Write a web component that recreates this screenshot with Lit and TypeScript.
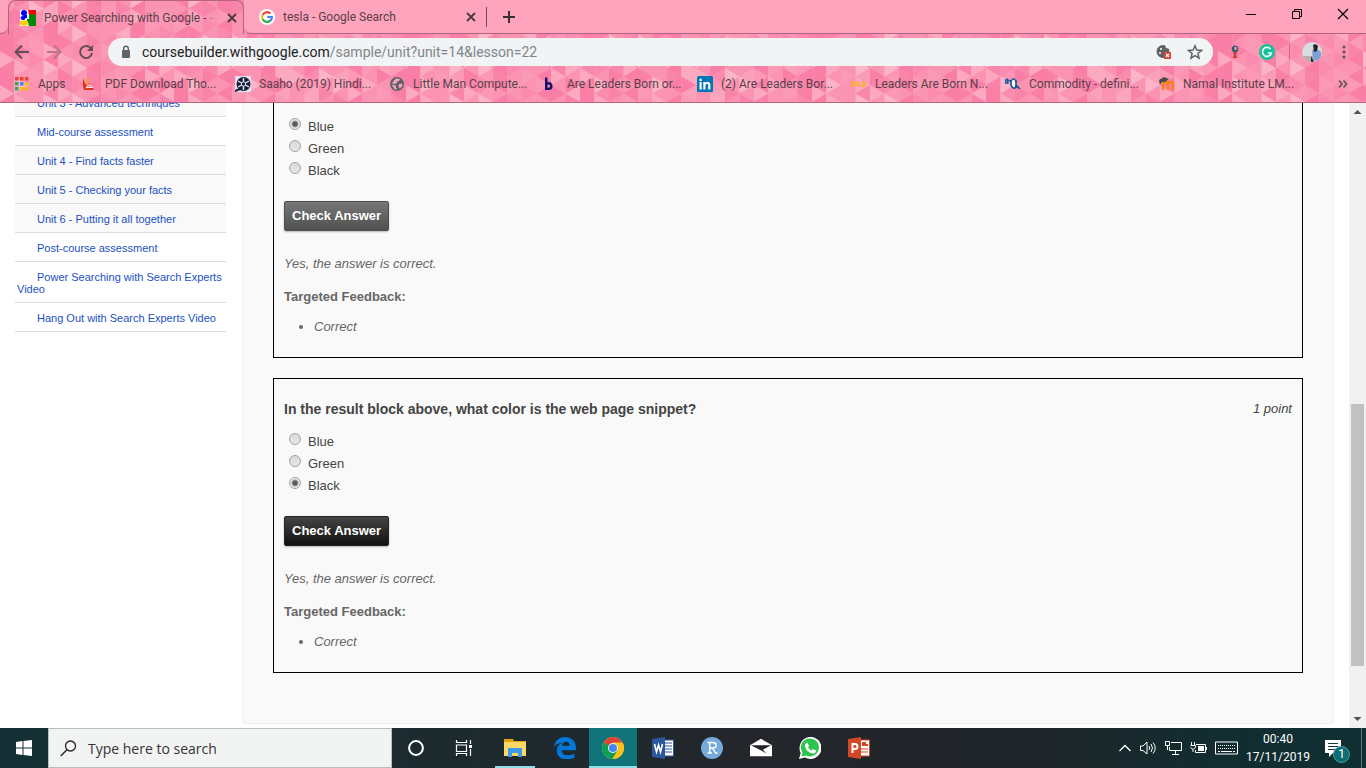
import { LitElement, html, svg, css } from "lit";
import { customElement, property } from "lit/decorators.js";

/* Faceted pink theme: right-pointing triangles in soft tints over a banded base. */
const TINTS = ["#fca9c0", "#f984aa", "#fb9ab6", "#fcb4c8", "#f97fa7", "#fb93b2", "#fa8bae"];
const facets = () => {
  const out = [];
  const step = 14.5;
  const tall = 17;
  for (let c = 0; c < 28; c++) {
    const x = c * step;
    out.push(svg`<path fill=${TINTS[4 + ((c * c + 3 * c) % 3)]} d=${`M${x} 0h${step + 0.3}v102h-${step + 0.3}z`}></path>`);
    for (let r = -1; r < 7; r++) {
      const y = r * tall + (c % 2 ? tall / 2 : 0);
      const n = (c * 31 + r * 17 + c * r * 7 + c * c * 3 + 40) % 97;
      const m = (c * 13 + r * 29 + c * r * 5 + r * r * 11 + 60) % 89;
      out.push(svg`<path fill=${TINTS[n % 7]} d=${`M${x} ${y}V${y + tall}L${x + step} ${y + tall / 2}Z`}></path>`);
      if (m % 3 === 0) {
        out.push(svg`<path fill=${TINTS[m % 7]} fill-opacity=".7" d=${`M${x + step} ${y + tall / 2}V${y + tall * 1.5}L${x} ${y + tall}Z`}></path>`);
      }
    }
  }
  return out;
};

const icons: Record<string, unknown> = {
  courses: svg`<svg viewBox="0 0 16 16"><path fill="#fff" d="M0 0h16v16H0z"/><ellipse cx="4" cy="3" rx="3" ry="3" fill="#00f"/><ellipse cx="3" cy="8" rx="2.500" ry="2" fill="#00f"/><path fill="#00f" d="M4 5h3v3H4z"/><path fill="#f00" d="M8 0h8v5H9z"/><path fill="#080" d="M9 4.500h7V16H9q-1-1-.5-3L7 11V9h2z"/><ellipse cx="4" cy="13" rx="4" ry="2.800" fill="#fc0"/></svg>`,
  google: svg`<svg viewBox="0 0 16 16"><circle cx="8" cy="8" r="8" fill="#fff"/><g fill="none" stroke-width="2.2"><path stroke="#ea4335" d="M3.700 6A4.800 4.800 0 0 1 11.500 4.600"/><path stroke="#fbbc05" d="M3.700 5.800A4.900 4.900 0 0 0 3.800 10.600"/><path stroke="#34a853" d="M3.700 10.300A4.900 4.900 0 0 0 11.300 11.600"/><path stroke="#4285f4" d="M8.200 8H12.900A4.800 4.800 0 0 1 11.100 11.800"/></g></svg>`,
  apps: svg`<svg viewBox="0 0 14 14"><path fill="#ea4335" d="M0 0h3.500v3.500H0zM5 0h3.500v3.500H5zM10 0h3.500v3.500H10z"/><path fill="#34a853" d="M0 5h3.500v3.500H0zM0 10h3.500v3.500H0z"/><path fill="#4285f4" d="M5 5h3.500v3.500H5z"/><path fill="#fbbc05" d="M10 5h3.500v3.500H10zM5 10h3.500v3.500H5zM10 10h3.500v3.500H10z"/></svg>`,
  pdf: svg`<svg viewBox="0 0 16 16"><path fill="#f5a31b" d="M6 1q3 2 1 5l-1 5-1-4z"/><path fill="#e0301e" d="M2 2l2 5 2 3 3-4-1 4 4 2 1 2H3l-1-4z"/><path fill="none" stroke="#fbdce4" stroke-width="1.200" d="M5 12l3-3 3 2.500H5"/></svg>`,
  reel: svg`<svg viewBox="0 0 16 16"><path fill="#dfe3ee" d="M0 0h16v16H0z"/><circle cx="8.500" cy="8" r="7" fill="#171d3b"/><path stroke="#e6e9f2" stroke-width="1.400" d="M8.500 2v12M3 5l11 6M14 5L3 11"/><circle cx="8.500" cy="8" r="2.200" fill="#171d3b" stroke="#e6e9f2"/><path stroke="#171d3b" stroke-width="2" d="M0 15l5-2"/></svg>`,
  globe: svg`<svg viewBox="0 0 16 16"><circle cx="8" cy="8" r="7" fill="#5f6368"/><path fill="#f9a5bf" d="M7 2.500l4 .5-1 2-2 .5-.5 2L5 8l-2-1zM2.500 8.500l4 1 .5 2 1.500 2-3-.5zM10 8l3-.5.5 2-2.500 3-1.500-2z"/></svg>`,
  b: svg`<svg viewBox="0 0 16 16"><path fill="none" stroke="#15106b" stroke-width="2.400" d="M3.200 1.500v12.500M3.200 10q0-2.800 2.500-2.800T8.300 10 5.700 12.900 3.200 10"/></svg>`,
  linkedin: svg`<svg viewBox="0 0 16 16"><rect width="16" height="16" rx="1.500" fill="#0077b5"/><path fill="#fff" d="M2.500 6h2.200v7.500H2.500zM2.500 2.800h2.200V5H2.500zM6.300 6h2.100v1q2-2 4-.6 1 .8 1 2.600v4.500h-2.200V9.500q0-1.700-1.200-1.700-1.500 0-1.500 1.700v4H6.300z"/></svg>`,
  phd: svg`<svg viewBox="0 0 16 16"><g fill="none" stroke="#fbae2e" stroke-width="1.600"><path d="M1 11V6h2.500v3H1M6.500 5v6M6.500 8.500H9V11M12 6v4.500h1q2.500-2.200 0-4.500z"/></g></svg>`,
  oa: svg`<svg viewBox="0 0 16 16"><path fill="#fff" d="M6 3h5v9H7z"/><g fill="none" stroke="#175a9b" stroke-width="1.600"><path d="M.8 8V4q2-2 2 1v3M4 5q2-2 2 3M6 8q0-5 2.500-5T11 8t-2.500 4T6 8M11 4v8M11 9l4 4"/></g></svg>`,
  moodle: svg`<svg viewBox="0 0 16 16"><path fill="none" stroke="#f98012" stroke-width="2.400" d="M4 14V9q0-3 2.500-3T9 9v5M9 9q0-3 2.500-3T14 9v5"/><path fill="#4a4a4a" d="M0 4l5-3 5 2-4 3-3 0-2 3z"/></svg>`,
  folder: svg`<svg viewBox="0 0 22 20"><path fill="#e6a008" d="M0 1h9l1 2h12v5H0z"/><path fill="#ffd767" d="M0 4h22v14H0z"/><path fill="#3a9be8" d="M4 10h14v9h-4v-4H8v4H4z"/></svg>`,
  edge: svg`<svg viewBox="0 0 20 20"><path fill="#0078d7" d="M0 9C1 3 5 0 10 0c6 0 10 4 10 10v2H7c0 3 2 4.500 5.500 4.500 2.500 0 4.500-.6 6-1.500v4C16 20 14 20.500 11.500 20.500 6 20.500 2.500 17 2.500 12.500 2.500 9 4.500 6.500 7.500 5 4 5.500 1.500 7 0 9zm7.200-1h7c0-2.500-1-3.700-3.400-3.700-2 0-3.300 1.500-3.600 3.700z"/></svg>`,
  chrome: svg`<svg viewBox="0 0 22 22"><circle cx="11" cy="11" r="11" fill="#fbc116"/><path fill="#db4437" d="M11 11L1.500 5.500A11 11 0 0 1 20.500 5.500H11z"/><path fill="#0f9d58" d="M11 11L1.500 5.500A11 11 0 0 0 10.500 22L16 13z"/><path fill="#fbc116" d="M11 6h9.800A11 11 0 0 1 10.500 22L16 13z"/><circle cx="11" cy="11" r="5" fill="#f1f1f1"/><circle cx="11" cy="11" r="4" fill="#4285f4"/></svg>`,
  word: svg`<svg viewBox="0 0 22 22"><path fill="#fff" stroke="#2b579a" d="M11 3h10.500v16H11z"/><path stroke="#2b579a" stroke-width="1.200" d="M13 6h7M13 9h7M13 12h7M13 15h7"/><path fill="#2b579a" d="M0 2l13-2v22L0 20z"/><path fill="none" stroke="#fff" stroke-width="1.600" d="M2.500 7l2 8 2-7 2 7 2-8"/></svg>`,
  r: svg`<svg viewBox="0 0 24 24"><circle cx="12" cy="12" r="12" fill="#75aadb"/><path fill="none" stroke="#fff" stroke-width="1.500" d="M7 6h6q3.500 0 3.500 3T13 12H9.500M9.500 6v11.500M7 17.500h5M12.500 12l3.500 5.500h2"/></svg>`,
  mail: svg`<svg viewBox="0 0 24 20"><path fill="#fff" d="M0 7L12 0l12 7v12H0z"/><path fill="#222429" d="M1 7h22l-9 5 4 4-9-5z"/></svg>`,
  whatsapp: svg`<svg viewBox="0 0 22 22"><path fill="#fff" d="M0 22l1.700-6A11 11 0 1 1 6 20.500z"/><path fill="#2cc64f" d="M2.500 19.500l1-4A9 9 0 1 1 7 18.500z"/><path fill="#fff" d="M7 6l1.500-.3L10 9 9 10.300q1.200 2.200 3.500 3.200l1.500-1.500 3 1.500q0 3-3 3Q7.500 16 6 9q0-2 1-3z"/></svg>`,
  ppt: svg`<svg viewBox="0 0 22 22"><path fill="#fff" stroke="#d24726" d="M11 3h10.500v16H11z"/><path fill="#d24726" d="M14 5h4v4h-4zM18 7h2v2h-2z"/><path stroke="#d24726" stroke-width="1.200" d="M13 12h7M13 15h7"/><path fill="#d24726" d="M0 2l13-2v22L0 20z"/><path fill="none" stroke="#fff" stroke-width="2" d="M4.500 16V7H7q2.500 0 2.500 2.500T7 12H4.500"/></svg>`,
};

@customElement("browser-frame")
class BrowserFrame extends LitElement {
  static styles = css`
    :host { display: block; flex: none; font: 12px/16px Roboto, "Open Sans", sans-serif; color: #5a3f4a; }
    svg { display: block; flex: none; }
    button { border: 0; padding: 0; background: none; color: inherit; display: flex; }
    a { color: inherit; text-decoration: none; }
    .frame { position: relative; overflow: hidden; border-bottom: 1px solid #b5637f; }
    .theme { position: absolute; inset: 0; width: 100%; height: 100%; }
    .rows { position: relative; }
    .tabs { display: flex; height: 34px; }
    .tab { display: flex; align-items: center; flex: none; box-sizing: border-box; }
    .open { width: 236px; border: 1px solid #b5637f; border-bottom: 0; border-radius: 8px 8px 0 0; margin-left: 8px; padding: 0 3px 0 11px; }
    .rest { flex: 1; display: flex; background: #ffa4bd; border-bottom: 1px solid #b5637f; border-radius: 0 0 0 7px; }
    .lead { width: 8px; flex: none; margin-right: -8px; background: #ffa4bd; border-bottom: 1px solid #b5637f; border-radius: 0 0 8px 0; }
    .favicon { width: 16px; height: 16px; margin-right: 8px; }
    .title { flex: 1; white-space: nowrap; }
    .faint { opacity: .4; }
    .other { width: 235px; padding-left: 15px; }
    .new { align-items: center; gap: 15px; display: flex; margin-left: 7px; }
    .bar { width: 1px; height: 20px; background: #754c59; }
    .window { margin-left: auto; display: flex; gap: 32px; padding: 7px 16px 0 0; }
    .tools { display: flex; align-items: center; height: 36px; padding: 0 19px 0 14px; }
    .nav { display: flex; gap: 16px; margin-right: 14px; }
    .address { flex: 1; display: flex; align-items: center; height: 28px; border-radius: 14px; background: #f1f3f4; padding: 0 10px 0 13px; gap: 15px; }
    .url { flex: 1; margin-left: -4px; font-size: 14px; line-height: 20px; color: #80868b; }
    .host { color: #202124; }
    .ext { display: flex; align-items: center; gap: 16px; margin-left: 14px; }
    .person { display: flex; align-items: center; gap: 12px; margin: 0 3px 0 -2px; }
    .divider { width: 1px; height: 16px; background: #c36d88; }
    .marks { display: flex; align-items: center; height: 32px; padding: 0 18px 4px 15px; box-sizing: border-box; }
    .mark { display: flex; align-items: center; width: 154px; white-space: nowrap; gap: 8px; }
    .mark svg { width: 16px; height: 16px; }
    .apps { width: 66px; gap: 9px; }
    .apps svg { width: 14px; height: 14px; }
    .more { margin-left: auto; }
  `;
  render() {
    const marks = [["pdf", "PDF Download Tho..."], ["reel", "Saaho (2019) Hindi..."], ["globe", "Little Man Compute..."], ["b", "Are Leaders Born or..."], ["linkedin", "(2) Are Leaders Bor..."], ["phd", "Leaders Are Born N..."], ["oa", "Commodity - defini..."], ["moodle", "Namal Institute LM..."]];
    const close = html`<button aria-label="Close tab"><svg width="16" height="16" viewBox="0 0 16 16"><path stroke="#4a3a40" stroke-width="1.800" d="M4 4l8 8M12 4l-8 8"/></svg></button>`;
    return html`<div class="frame">
      <svg class="theme"><defs><pattern id="facets" width="406" height="102" patternUnits="userSpaceOnUse">${facets()}</pattern></defs><rect width="100%" height="100%" fill="url(#facets)"/></svg>
      <div class="rows">
      <div class="tabs">
        <div class="lead"></div>
        <div class="tab open"><span class="favicon">${icons.courses}</span><span class="title">Power Searching with Google - <span class="faint">-</span></span>${close}</div>
        <div class="rest">
          <div class="tab other"><span class="favicon">${icons.google}</span><span class="title">tesla - Google Search</span>${close}</div>
          <div class="new"><span class="bar"></span><button aria-label="New tab"><svg width="14" height="14" viewBox="0 0 14 14"><path stroke="#3d3035" stroke-width="2" d="M7 1v12M1 7h12"/></svg></button></div>
          <div class="window">
            <button aria-label="Minimize"><svg width="14" height="14" viewBox="0 0 14 14"><path stroke="#000" d="M2 7.500h10"/></svg></button>
            <button aria-label="Restore"><svg width="14" height="14" viewBox="0 0 14 14"><path fill="none" stroke="#000" d="M2.500 4.500h7v7h-7zM4.500 4.500v-2h7v7h-2"/></svg></button>
            <button aria-label="Close"><svg width="14" height="14" viewBox="0 0 14 14"><path stroke="#000" stroke-width="1.200" d="M2 2l10 10M12 2L2 12"/></svg></button>
          </div>
        </div>
      </div>
      <div class="tools">
        <div class="nav">
          <button aria-label="Back"><svg width="16" height="16" viewBox="0 0 16 16"><path fill="none" stroke="#5f5055" stroke-width="2" d="M15 8H2M8 1.500L1.500 8 8 14.500"/></svg></button>
          <button aria-label="Forward"><svg width="16" height="16" viewBox="0 0 16 16"><path fill="none" stroke="#b8758b" stroke-width="2" d="M1 8h13M8 1.500L14.500 8 8 14.500"/></svg></button>
          <button aria-label="Reload"><svg width="16" height="16" viewBox="0 0 16 16"><path fill="none" stroke="#5f5055" stroke-width="2" d="M13 4.500A6 6 0 1 0 14 9"/><path fill="#5f5055" d="M15 1v6H9z"/></svg></button>
        </div>
        <div class="address">
          <svg width="10" height="14" viewBox="0 0 10 14"><rect y="5" x="1" width="8" height="8" rx="1" fill="#5f6368"/><path fill="none" stroke="#5f6368" stroke-width="1.400" d="M2.700 6V3.500a2.300 2.300 0 0 1 4.600 0V6"/></svg>
          <div class="url" role="textbox" aria-label="Address"><span class="host">coursebuilder.withgoogle.com</span>/sample/unit?unit=14&amp;lesson=22</div>
          <svg width="16" height="16" viewBox="0 0 16 16"><circle cx="7" cy="7.500" r="6.500" fill="#5f6368"/><circle cx="5" cy="5" r="1" fill="#fff"/><circle cx="4" cy="9" r="1" fill="#fff"/><path fill="#f1f3f4" d="M9 0h5v5l-4-1z"/><path fill="#db4437" d="M8 8h7v7H8z"/><path stroke="#fff" stroke-width="1.300" d="M10 10l3 3M13 10l-3 3"/></svg>
          <svg width="16" height="16" viewBox="0 0 16 16"><path fill="none" stroke="#5f6368" stroke-width="1.500" d="M8 1.800l1.800 4.300 4.700.4-3.600 3 1.100 4.600-4-2.500-4 2.500 1.100-4.600-3.600-3 4.700-.4z"/></svg>
        </div>
        <div class="ext">
          <svg width="16" height="16" viewBox="0 0 16 16"><circle cx="8" cy="5" r="3.200" fill="#31566f"/><path fill="#c9403a" d="M6 8h4l-1 3 1.500 3h-5L7 11z"/><path fill="#f0b88a" d="M7.500 3h2v3h-2z"/></svg>
          <svg width="16" height="16" viewBox="0 0 16 16"><circle cx="8" cy="8" r="8" fill="#15c39a"/><path fill="none" stroke="#fff" stroke-width="1.600" d="M11.500 5A4.500 4.500 0 1 0 12.400 9H9"/></svg>
          <div class="person">
            <span class="divider"></span>
            <svg width="20" height="20" viewBox="0 0 20 20"><defs><clipPath id="face"><circle cx="10" cy="10" r="10"/></clipPath></defs><g clip-path="url(#face)"><path fill="#d7dcdf" d="M0 0h20v20H0z"/><path fill="#b6b1a7" d="M0 14h20v6H0z"/><path fill="#7ba2d3" d="M10 8l5-1 4 3v8h-8z"/><path fill="#25242c" d="M11 3q3-2 5 1l-1 5-3 1zM9 14l3 6H9z"/></g></svg>
          </div>
          <svg width="6" height="16" viewBox="0 0 6 16"><g fill="#5f5055"><circle cx="3" cy="3" r="1.500"/><circle cx="3" cy="8" r="1.500"/><circle cx="3" cy="13" r="1.500"/></g></svg>
        </div>
      </div>
      <div class="marks">
        <a class="mark apps" href="#">${icons.apps}Apps</a>
        ${marks.map(([icon, label]) => html`<a class="mark" href="#">${icons[icon]}${label}</a>`)}
        <button class="more" aria-label="More bookmarks"><svg width="10" height="10" viewBox="0 0 10 10"><path fill="none" stroke="#5f5055" stroke-width="1.600" d="M1 1.500L4 5 1 8.500M5.500 1.500l3 3.500-3 3.500"/></svg></button>
      </div>
      </div>
    </div>`;
  }
}

@customElement("quiz-question")
class QuizQuestion extends LitElement {
  @property() question = "";
  @property() answer = "";
  @property({ type: Boolean }) muted = false;
  static styles = css`
    :host { display: block; font: 13px/18px "Liberation Sans", Arial, sans-serif; color: #444; }
    .card { border: 1px solid #000; padding: 20px 10px 21px; }
    .continued { border-top: 0; padding-top: 12px; }
    .head { display: flex; justify-content: space-between; margin-bottom: 11px; line-height: 20px; }
    .head h2 { margin: 0; font-size: 14px; line-height: 20px; }
    .options { border: 0; margin: 0 0 20px; padding: 0 0 0 5px; }
    .option { display: flex; align-items: center; box-sizing: border-box; height: 22px; padding-top: 2px; gap: 7px; }
    .option input { appearance: none; box-sizing: border-box; width: 12px; height: 12px; margin: 0 0 6px; border: 1px solid #a3a3a3; border-radius: 50%; background: linear-gradient(#d9d9d9, #e6e6e6); }
    .option input:checked { background: radial-gradient(circle, #5a5a5a 0 2px, #e8e8e8 4px); }
    .check { display: block; height: 30px; padding: 0 7px 1px; border: 1px solid #222; border-radius: 2px; background: linear-gradient(#444, #111); color: #fff; font: bold 13px "Liberation Sans", Arial, sans-serif; box-shadow: 0 1px 2px #0004; }
    .muted { border-color: #4e4e4e; background: linear-gradient(#777, #505050); }
    .feedback { color: #666; }
    .feedback p { margin: 24px 0 15px; font-style: italic; }
    .feedback h3 { margin: 0 0 12px; font-size: 13px; line-height: 18px; }
    .feedback ul { margin: 0; padding-left: 30px; font-style: italic; }
  `;
  render() {
    return html`<section class="card ${this.question ? "" : "continued"}">
      ${this.question ? html`<div class="head"><h2>${this.question}</h2><i>1 point</i></div>` : ""}
      <fieldset class="options">
        ${["Blue", "Green", "Black"].map((o) => html`<label class="option"><input type="radio" name="color" .checked=${o === this.answer}>${o}</label>`)}
      </fieldset>
      <button class="check ${this.muted ? "muted" : ""}">Check Answer</button>
      <div class="feedback"><p>Yes, the answer is correct.</p><h3>Targeted Feedback:</h3><ul><li>Correct</li></ul></div>
    </section>`;
  }
}

@customElement("task-bar")
class TaskBar extends LitElement {
  static styles = css`
    :host { display: flex; flex: none; height: 40px; background: linear-gradient(90deg, #143034, #1d2a2e 35%, #24262b 55%, #1f2529 75%, #132c30 88%, #0f3033); color: #fff; font: 12px/18px Roboto, "Open Sans", sans-serif; }
    svg { display: block; }
    button { border: 0; padding: 0; background: none; color: inherit; font: inherit; display: flex; align-items: center; justify-content: center; }
    .start { width: 48px; }
    .search { display: flex; align-items: center; gap: 11px; width: 344px; box-sizing: border-box; padding: 1px 0 0 11px; border: 1px solid #b9bcbc; background: #f2f3f3; }
    .search input { flex: 1; min-width: 0; border: 0; padding: 0; background: none; font: 14px/20px "Open Sans", sans-serif; color: #333; outline: 0; }
    .search input::placeholder { color: #333; opacity: 1; }
    .apps { display: flex; }
    .app { width: 49px; box-sizing: border-box; }
    .app svg { width: 22px; height: 22px; }
    .tool { width: 48px; }
    .running { width: 40px; margin: 0 5px 0 7px; box-shadow: inset 0 -2px #8fe0e4; }
    .current { width: 48px; margin-right: 1px; background: #10747a; box-shadow: inset 0 -2px #8fe0e4; }
    .tray { margin-left: auto; display: flex; align-items: center; gap: 8px; }
    .clock { text-align: center; width: 64px; }
    .note { position: relative; margin: 0 11px 0 7px; }
    .count { position: absolute; left: 8px; top: 6px; width: 15px; height: 15px; border: 1px solid #4c9da1; border-radius: 50%; background: #0e6e73; line-height: 15px; text-align: center; }
    .edge { align-self: stretch; width: 4px; border-left: 1px solid #61797b; }
  `;
  render() {
    const app = (name: string, cls = "") => html`<button class="app ${cls}" aria-label=${name}>${icons[name]}</button>`;
    return html`
      <button class="start" aria-label="Start"><svg width="16" height="16" viewBox="0 0 16 16"><path fill="#fff" d="M0 2l6.500-1v6.500H0zM7.500.9L16 0v7.500H7.500zM0 8.500h6.500V15L0 14zM7.500 8.500H16V16l-8.500-1z"/></svg></button>
      <label class="search"><svg width="17" height="17" viewBox="0 0 17 17"><circle cx="10.500" cy="6" r="5" fill="none" stroke="#222" stroke-width="1.300"/><path stroke="#222" stroke-width="1.300" d="M7 9.700L.7 16"/></svg><input placeholder="Type here to search" aria-label="Search"></label>
      <div class="apps">
        <button class="app tool" aria-label="Cortana"><svg viewBox="0 0 22 22"><circle cx="11" cy="11" r="6.900" fill="none" stroke="#fff" stroke-width="2"/></svg></button>
        <button class="app tool" aria-label="Task view"><svg viewBox="0 0 22 22"><path fill="none" stroke="#fff" stroke-width="1.200" d="M3.500 3v2.500h10V3M3.500 8h10v6.500h-10zM3.500 19v-2.500h10V19M17.500 3v4M17.500 12v7"/><path fill="#fff" d="M16 8h3v3h-3z"/></svg></button>
        ${app("folder", "running")}${app("edge")}${app("chrome", "current")}${app("word")}${app("r")}${app("mail")}${app("whatsapp")}${app("ppt")}
      </div>
      <div class="tray">
        <svg width="14" height="14" viewBox="0 0 14 14"><path fill="none" stroke="#fff" stroke-width="1.300" d="M1.500 10L7 4.500l5.500 5.500"/></svg>
        <svg width="17" height="14" viewBox="0 0 17 14"><path fill="none" stroke="#fff" d="M.5 5h2.500l4-4v12L3 9.500H.5zM9 5q1.500 2 0 4M11 3q3 4 0 8M13 1.500q4.500 5.500 0 11"/></svg>
        <svg width="17" height="14" viewBox="0 0 17 14"><path fill="none" stroke="#fff" d="M6 1.500h10.500v8H4.500V6M10.500 10v3M7 13.500h7M.5.500h4v4h-4zM2.500 5v4"/></svg>
        <svg width="17" height="14" viewBox="0 0 17 14"><path fill="none" stroke="#fff" d="M6 3.500h9.500v8h-10V9M16.500 6v3M1.500 1v3M4.500 1v3M.5 4.500h5v2l-2 1.500h-1L.5 6.500M3 8v3"/><path fill="#fff" d="M8 5h6v5H8z"/></svg>
        <svg width="23" height="14" viewBox="0 0 23 14"><path fill="none" stroke="#fff" d="M.5 1h22v12H.5z"/><path stroke="#fff" stroke-dasharray="1 1" d="M3 4.500h17M3 7.500h17"/><path stroke="#fff" d="M3 10.500h2M6 10.500h11M18 10.500h2"/></svg>
        <div class="clock">00:40<br>17/11/2019</div>
        <div class="note"><svg width="17" height="17" viewBox="0 0 17 17"><path fill="#fff" d="M0 0h16v13H8l-4 4v-4H0z"/><path stroke="#14383b" d="M3 3.500h10M3 6.500h10M3 9.500h7"/></svg><span class="count">1</span></div>
        <span class="edge"></span>
      </div>`;
  }
}

@customElement("app-root")
class AppRoot extends LitElement {
  static styles = css`
    :host { display: flex; flex-direction: column; height: 100vh; background: #fff; }
    .view { flex: 1; min-height: 0; display: flex; overflow: hidden; }
    .side { width: 211px; flex: none; margin: -15px 16px 0 15px; font: 11px/12px "Liberation Sans", Arial, sans-serif; }
    .side a { display: block; padding: 9px 2px 7px; text-indent: 20px; border-bottom: 1px solid #ddd; color: #1a50c4; text-decoration: none; }
    .side .unit { background: #f9f9f9; }
    .main { flex: 1; align-self: flex-start; box-sizing: border-box; padding: 0 30px 50px; background: #f9f9f9; border: 1px solid #eee; border-top: 0; border-radius: 0 0 4px 4px; display: grid; gap: 20px; }
    .scroll { width: 17px; flex: none; margin-left: 15px; background: #f1f1f1; display: flex; flex-direction: column; align-items: center; }
    .scroll svg { display: block; flex: none; }
    .before { flex: 284; }
    .thumb { flex: 262; width: 13px; background: #c1c1c1; }
    .after { flex: 45; }
  `;
  render() {
    const links = ["Unit 3 - Advanced techniques", "Mid-course assessment", "Unit 4 - Find facts faster", "Unit 5 - Checking your facts", "Unit 6 - Putting it all together", "Post-course assessment", "Power Searching with Search Experts Video", "Hang Out with Search Experts Video"];
    return html`<browser-frame></browser-frame>
      <div class="view">
        <nav class="side">${links.map((l) => html`<a class=${l.startsWith("Unit") ? "unit" : ""} href="#">${l}</a>`)}</nav>
        <main class="main">
          <quiz-question answer="Blue" muted></quiz-question>
          <quiz-question question="In the result block above, what color is the web page snippet?" answer="Black"></quiz-question>
        </main>
        <div class="scroll">
          <svg width="17" height="17" viewBox="0 0 17 17"><path fill="#505050" d="M4.500 11h8l-4-4z"/></svg>
          <span class="before"></span><span class="thumb"></span><span class="after"></span>
          <svg width="17" height="17" viewBox="0 0 17 17"><path fill="#505050" d="M4.500 6h8l-4 4z"/></svg>
        </div>
      </div>
      <task-bar></task-bar>`;
  }
}
